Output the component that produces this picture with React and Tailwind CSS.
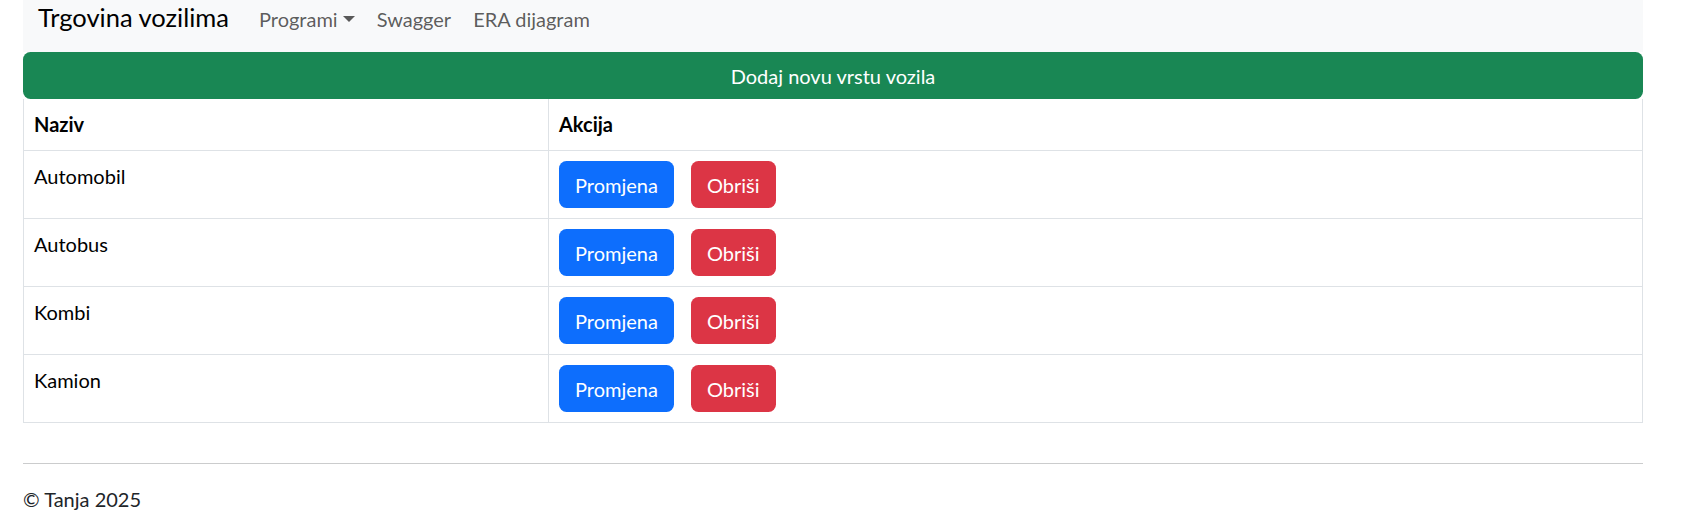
import React from "react";

const rows = ["Automobil", "Autobus", "Kombi", "Kamion"];

export default function App() {
  return (
    <div className="w-full bg-white text-[#212529] font-['Lato','Open_Sans',sans-serif]">
      <nav className="ml-[23px] w-[1620px] h-[52px] bg-[#f8f9fa] flex items-baseline pl-[15px]">
        <a className="text-[25.5px] leading-[34px] text-black mr-[19px]">Trgovina vozilima</a>
        <a className="text-[20px] leading-[30px] text-black/65 px-[11px]">
          Programi
          <span className="inline-block ml-[5px] align-[5px] border-t-[6px] border-r-[6px] border-l-[6px] border-b-0 border-r-transparent border-l-transparent border-t-[#595959]" />
        </a>
        <a className="text-[20px] leading-[30px] text-black/65 px-[11px]">Swagger</a>
        <a className="text-[20px] leading-[30px] text-black/65 px-[11px]">ERA dijagram</a>
      </nav>

      <button className="ml-[23px] w-[1620px] h-[47px] bg-[#198754] text-white text-[20px] leading-[30px] rounded-[7.5px] flex items-center justify-center">
        Dodaj novu vrstu vozila
      </button>

      <table className="ml-[23px] w-[1620px] border-collapse text-black text-[20px] leading-[30px]">
        <thead>
          <tr>
            <th className="w-[525px] border border-[#dee2e6] border-t-0 px-[10px] pt-[10px] pb-[11px] text-left font-bold">Naziv</th>
            <th className="border border-[#dee2e6] border-t-0 px-[10px] pt-[10px] pb-[11px] text-left font-bold">Akcija</th>
          </tr>
        </thead>
        <tbody>
          {rows.map((r) => (
            <tr key={r}>
              <td className="border border-[#dee2e6] px-[10px] py-[10px] align-top">{r}</td>
              <td className="border border-[#dee2e6] px-[10px] py-[10px] align-top">
                <div className="flex gap-[17px]">
                  <button className="h-[47px] px-[16px] bg-[#0d6efd] text-white rounded-[7.5px]">Promjena</button>
                  <button className="h-[47px] px-[16px] bg-[#dc3545] text-white rounded-[7.5px]">Obriši</button>
                </div>
              </td>
            </tr>
          ))}
        </tbody>
      </table>

      <hr className="ml-[23px] w-[1620px] mt-[40px] border-0 border-t border-[#cbcccd]" />
      <footer className="ml-[23px] mt-[20px] text-[20px] leading-[30px]">© Tanja 2025</footer>
    </div>
  );
}
